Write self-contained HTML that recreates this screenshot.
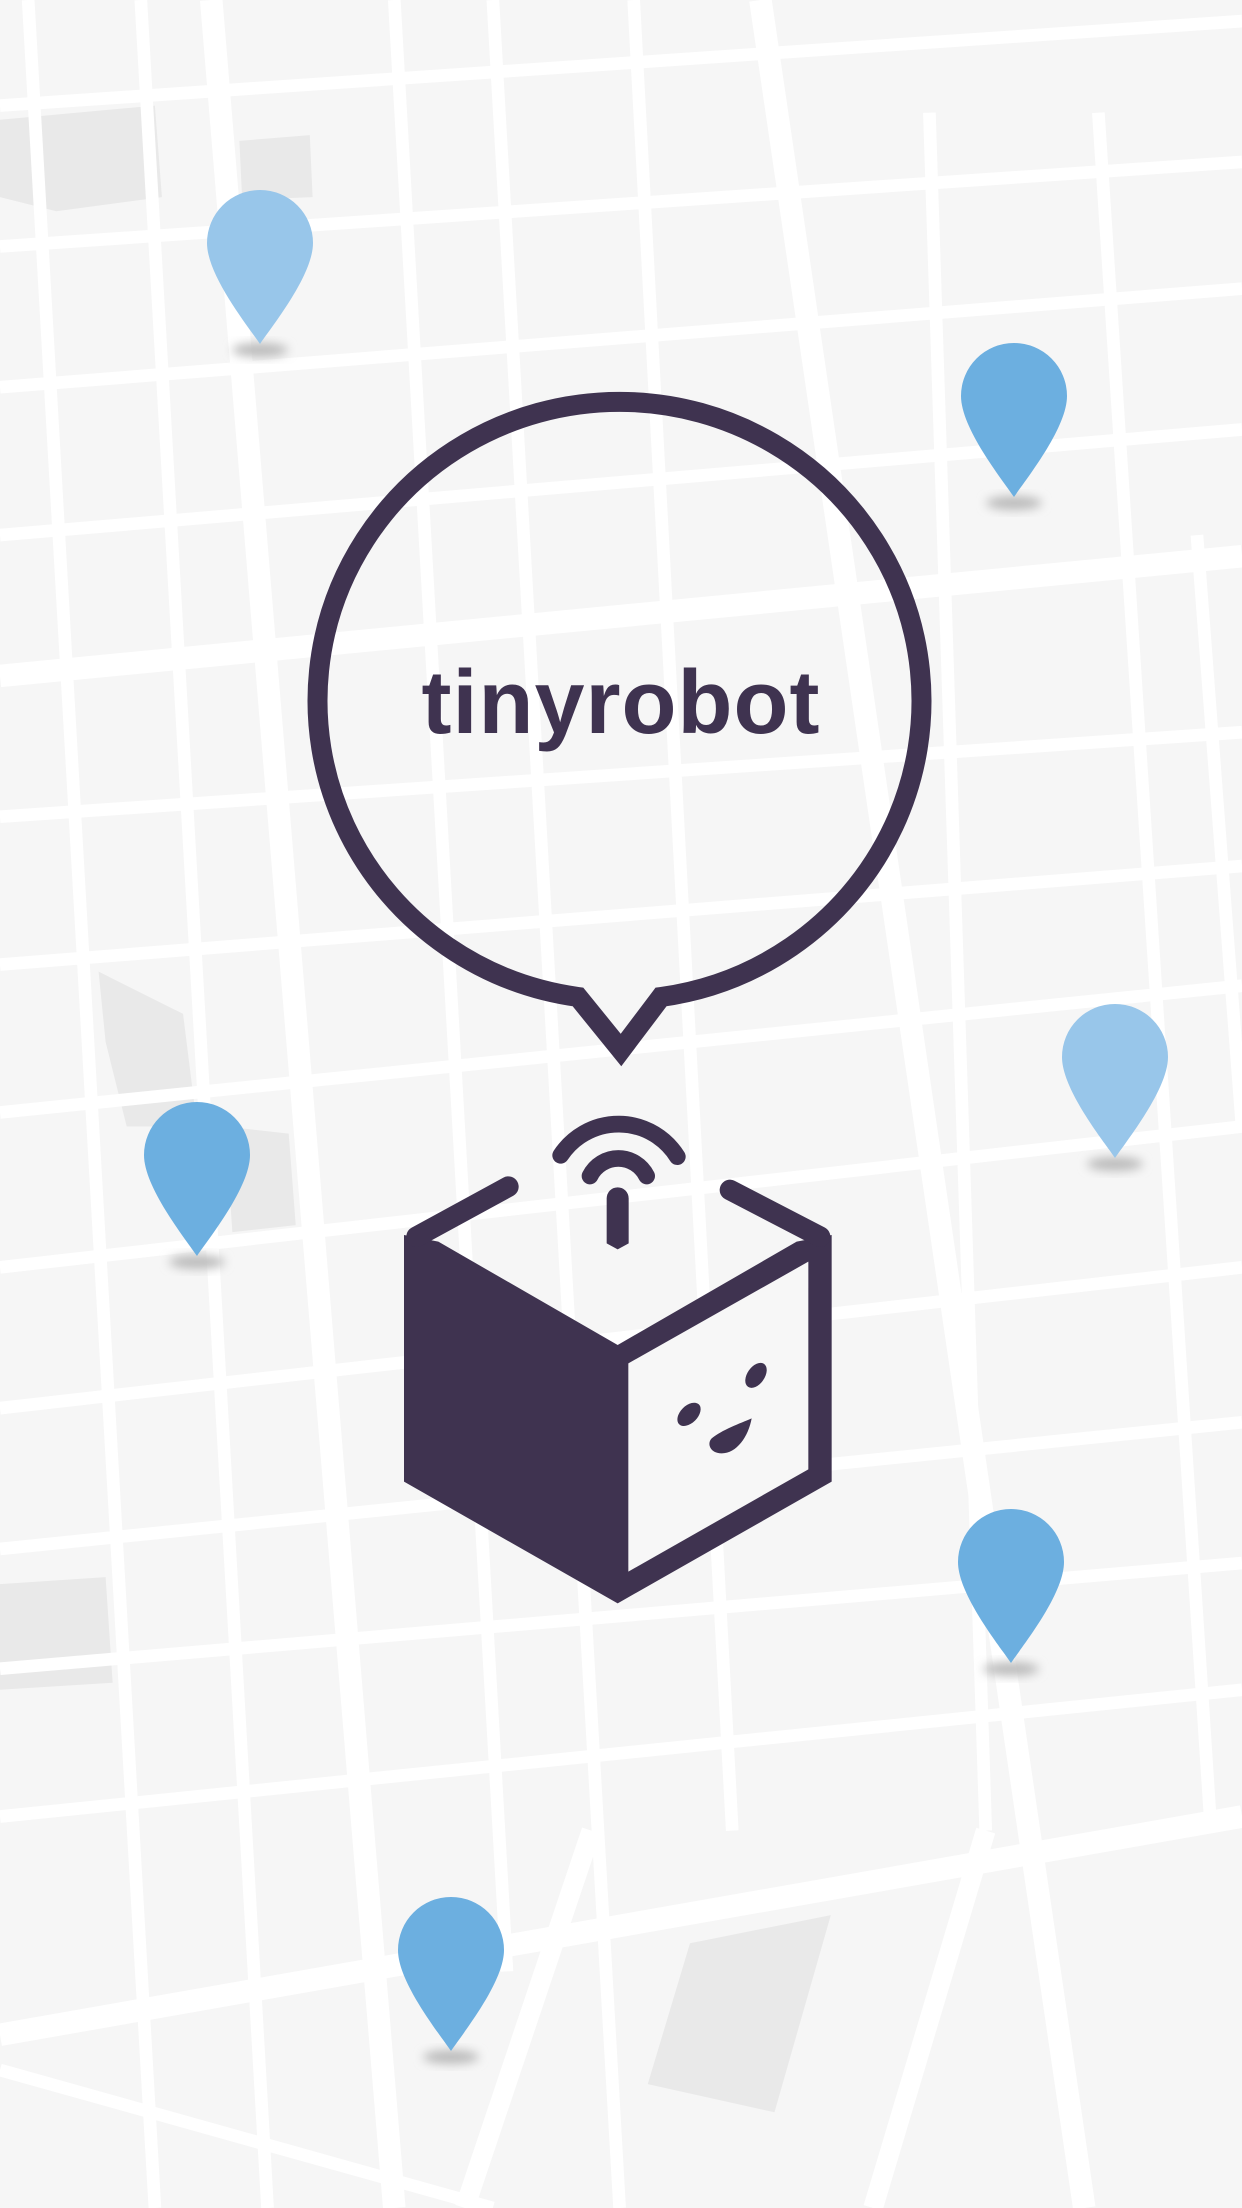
<!DOCTYPE html>
<html><head><meta charset="utf-8"><style>
html,body{margin:0;padding:0}
body{width:1242px;height:2208px;position:relative;overflow:hidden;background:#f6f6f6;font-family:"Liberation Sans",sans-serif}
svg{position:absolute}
</style></head><body>
<svg width="1242" height="2208" viewBox="0 0 882 1568" style="left:0;top:0">
<g fill="#e9e9e9">
<polygon points="0,85 110,75 115,140 40,150 0,140"/>
<polygon points="170,100 220,96 222,140 172,142"/>
<polygon points="70,690 130,720 140,800 90,800 75,740"/>
<polygon points="160,800 205,805 210,870 165,875"/>
<polygon points="0,1125 75,1120 80,1195 0,1200"/>
<polygon points="490,1380 590,1360 550,1500 460,1480"/>
</g>
<g stroke="#ffffff" stroke-width="9" fill="none">
<line x1="0" y1="75" x2="882" y2="15"/>
<line x1="0" y1="175" x2="882" y2="115"/>
<line x1="0" y1="275" x2="882" y2="205"/>
<line x1="0" y1="380" x2="882" y2="305"/>
<line x1="0" y1="480" x2="882" y2="395" stroke-width="16"/>
<line x1="0" y1="580" x2="882" y2="520"/>
<line x1="0" y1="685" x2="882" y2="615"/>
<line x1="0" y1="790" x2="882" y2="700"/>
<line x1="0" y1="900" x2="882" y2="800"/>
<line x1="0" y1="1000" x2="882" y2="900"/>
<line x1="0" y1="1100" x2="882" y2="1010"/>
<line x1="0" y1="1185" x2="882" y2="1110"/>
<line x1="0" y1="1290" x2="882" y2="1200"/>
<line x1="0" y1="1445" x2="882" y2="1290" stroke-width="16"/>
<line x1="0" y1="1470" x2="350" y2="1568"/>
<line x1="20" y1="0" x2="110" y2="1568"/>
<line x1="100" y1="0" x2="190" y2="1568"/>
<line x1="150" y1="0" x2="280" y2="1568" stroke-width="16"/>
<line x1="280" y1="0" x2="360" y2="1400"/>
<line x1="350" y1="0" x2="440" y2="1568"/>
<line x1="450" y1="0" x2="520" y2="1300"/>
<line x1="540" y1="0" x2="770" y2="1568" stroke-width="16"/>
<line x1="660" y1="80" x2="700" y2="1300"/>
<line x1="780" y1="80" x2="860" y2="1300"/>
<line x1="850" y1="380" x2="882" y2="800"/>
<line x1="420" y1="1300" x2="330" y2="1568" stroke-width="14"/>
<line x1="700" y1="1300" x2="620" y2="1568" stroke-width="14"/>
</g>
</svg>

<svg width="1242" height="2208" style="left:0;top:0">
<defs><filter id="b" x="-50%" y="-50%" width="200%" height="200%"><feGaussianBlur stdDeviation="5"/></filter>
<path id="pin" d="M53,154 C40,135 0,85 0,53 A53,53 0 0 1 106,53 C106,85 66,135 53,154Z"/></defs>
<g>
<g transform="translate(207,190)"><ellipse cx="53" cy="160" rx="28" ry="7" fill="#bbb" filter="url(#b)"/><use href="#pin" fill="#98c6ea"/></g>
<g transform="translate(961,343)"><ellipse cx="53" cy="160" rx="28" ry="7" fill="#bbb" filter="url(#b)"/><use href="#pin" fill="#6cafe0"/></g>
<g transform="translate(144,1102)"><ellipse cx="53" cy="160" rx="28" ry="7" fill="#bbb" filter="url(#b)"/><use href="#pin" fill="#6cafe0"/></g>
<g transform="translate(1062,1004)"><ellipse cx="53" cy="160" rx="28" ry="7" fill="#bbb" filter="url(#b)"/><use href="#pin" fill="#98c6ea"/></g>
<g transform="translate(958,1509)"><ellipse cx="53" cy="160" rx="28" ry="7" fill="#bbb" filter="url(#b)"/><use href="#pin" fill="#6cafe0"/></g>
<g transform="translate(398,1897)"><ellipse cx="53" cy="160" rx="28" ry="7" fill="#bbb" filter="url(#b)"/><use href="#pin" fill="#6cafe0"/></g>
</g>
<path d="M661,997 L621,1050 L578,997 A302,299 0 1 1 661,997 Z" fill="none" stroke="#3f3350" stroke-width="20" stroke-linejoin="miter"/>
<text x="621" y="733" text-anchor="middle" font-family="Liberation Sans, sans-serif" font-weight="bold" font-size="90" letter-spacing="1" fill="#3f3350">tinyrobot</text>
</svg>

<svg width="460" height="520" viewBox="0 0 1380 1560" style="left:390px;top:1090px">
<g fill="#3f3350" stroke="none">
<polygon points="42,435 42,1175 683,1540 1325,1175 1325,435 1220,455 683,765 145,455"/>
</g>
<polygon points="715,820 1255,515 1255,1138 715,1445" fill="#f7f7f7"/>
<g stroke="#3f3350" stroke-width="62" stroke-linecap="round" fill="none">
<line x1="80" y1="440" x2="355" y2="290"/>
<line x1="1290" y1="440" x2="1020" y2="300"/>
<path d="M600,258 A95,95 0 0 1 770,258" stroke-width="50"/>
<path d="M512,196 A208,208 0 0 1 862,200" stroke-width="50"/>
</g>
<path d="M650,325 A33,33 0 0 1 716,325 L716,460 L683,478 L650,460 Z" fill="#3f3350"/>
<g fill="#3f3350">
<ellipse cx="897" cy="973" rx="26" ry="42" transform="rotate(45 897 973)"/>
<ellipse cx="1098" cy="856" rx="26" ry="42" transform="rotate(35 1098 856)"/>
<path d="M1085,985 C1075,1040 1040,1090 995,1090 C960,1090 950,1060 965,1045 C995,1020 1050,1000 1085,985 Z"/>
</g>
</svg>
</body></html>
